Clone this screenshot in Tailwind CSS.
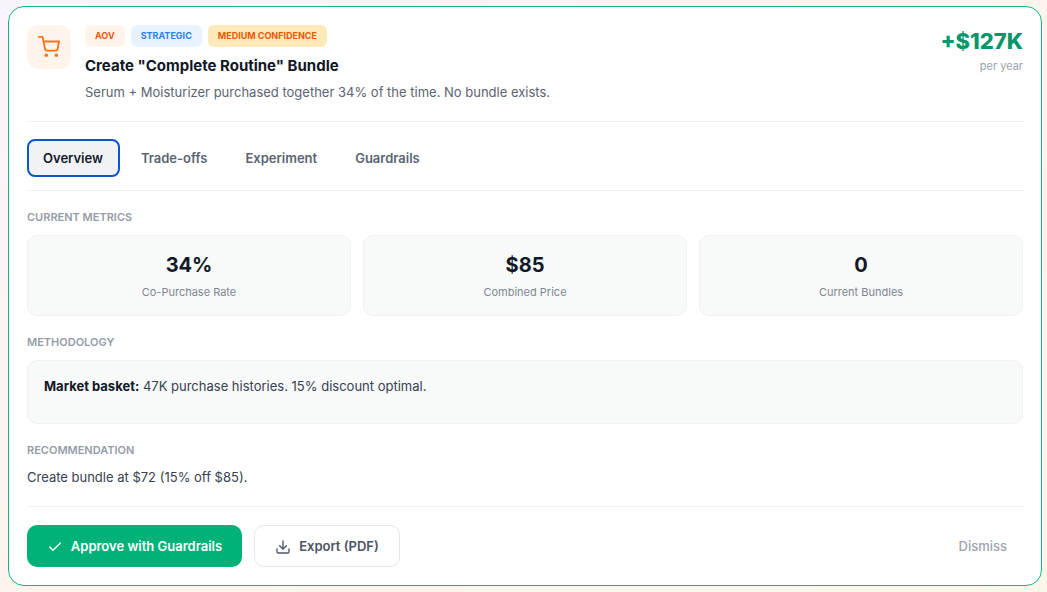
<!DOCTYPE html>
<html>
<head>
<meta charset="utf-8">
<script src="https://cdn.jsdelivr.net/npm/@tailwindcss/browser@4"></script>
</head>
<body class="m-0 h-[592px] w-[1047px] overflow-hidden bg-gradient-to-br from-[#f9f3fb] via-[#fdf4ee] to-[#fbf6ea] font-['Inter',sans-serif]">
<div class="pt-[6px] pl-[8px]">
<div class="flex h-[580px] w-[1034px] flex-col rounded-2xl border border-[#10b981] bg-white px-[18px] pt-[18px]">
  <div class="flex h-[97px] gap-[14px] border-b border-[#f0f1f3]">
    <div class="flex h-[44px] w-[44px] items-center justify-center rounded-[12px] bg-[#fff4eb]">
      <svg class="h-[22px] w-[22px]" viewBox="0 0 24 24" fill="none" stroke="#f97316" stroke-width="2" stroke-linecap="round" stroke-linejoin="round"><circle cx="9" cy="21" r="1" fill="#f97316"/><circle cx="20" cy="21" r="1" fill="#f97316"/><path d="M1 1h4l2.68 13.39a2 2 0 0 0 2 1.61h9.72a2 2 0 0 0 2-1.61L23 6H6"/></svg>
    </div>
    <div class="flex-1">
      <div class="flex gap-[6px]">
        <span class="flex h-[22px] items-center rounded-[6px] bg-[#fff4eb] px-[10px] text-[9px] font-bold text-[#ea580c]">AOV</span>
        <span class="flex h-[22px] items-center rounded-[6px] bg-[#e8f2fe] px-[10px] text-[9px] font-bold text-[#2b7fee]">STRATEGIC</span>
        <span class="flex h-[22px] items-center rounded-[6px] bg-[#feeab9] px-[10px] text-[9px] font-bold text-[#ea580c]">MEDIUM CONFIDENCE</span>
      </div>
      <div class="mt-[8px] text-[15px] leading-[22px] font-bold text-[#111827]">Create "Complete Routine" Bundle</div>
      <div class="mt-[6px] text-[13px] leading-[18px] text-[#5b6472]">Serum + Moisturizer purchased together 34% of the time. No bundle exists.</div>
    </div>
    <div class="text-right">
      <div class="text-[22px] leading-[32px] font-extrabold text-[#059669]">+$127K</div>
      <div class="mt-[2px] text-[11px] leading-[14px] text-[#9ca3af]">per year</div>
    </div>
  </div>
  <div class="flex h-[69px] items-start gap-[4px] border-b border-[#f0f1f3] pt-[17px] text-[13px] font-semibold text-[#5b6472]">
    <span class="flex h-[38px] items-center rounded-[8px] border-2 border-[#0b57c9] bg-[#f1f2f5] pt-[1px] pr-[15px] pl-[14px] text-[#111827]">Overview</span>
    <span class="flex h-[38px] items-center px-[17px] pt-[2px]">Trade-offs</span>
    <span class="flex h-[38px] items-center px-[17px] pt-[2px]">Experiment</span>
    <span class="flex h-[38px] items-center px-[17px] pt-[2px]">Guardrails</span>
  </div>
  <div class="mt-[20px] text-[11px] leading-[12px] font-semibold text-[#959ca8]">CURRENT METRICS</div>
  <div class="mt-[12px] grid grid-cols-3 gap-[12px]">
    <div class="flex h-[81px] flex-col items-center rounded-[10px] border border-[#f0f1f3] bg-[#f8f9f9] pt-[15px]"><div class="text-[20px] leading-[28px] font-bold text-[#111827]">34%</div><div class="mt-[6px] text-[11px] leading-[14px] text-[#7f8692]">Co-Purchase Rate</div></div>
    <div class="flex h-[81px] flex-col items-center rounded-[10px] border border-[#f0f1f3] bg-[#f8f9f9] pt-[15px]"><div class="text-[20px] leading-[28px] font-bold text-[#111827]">$85</div><div class="mt-[6px] text-[11px] leading-[14px] text-[#7f8692]">Combined Price</div></div>
    <div class="flex h-[81px] flex-col items-center rounded-[10px] border border-[#f0f1f3] bg-[#f8f9f9] pt-[15px]"><div class="text-[20px] leading-[28px] font-bold text-[#111827]">0</div><div class="mt-[6px] text-[11px] leading-[14px] text-[#7f8692]">Current Bundles</div></div>
  </div>
  <div class="mt-[20px] text-[11px] leading-[12px] font-semibold text-[#959ca8]">METHODOLOGY</div>
  <div class="mt-[12px] h-[64px] rounded-[10px] border border-[#f0f1f3] bg-[#f8f9f9] px-[16px] pt-[16px] text-[13px] leading-[18px] text-[#374151]"><b class="font-bold text-[#111827]">Market basket:</b> 47K purchase histories. 15% discount optimal.</div>
  <div class="mt-[20px] text-[11px] leading-[12px] font-semibold text-[#959ca8]">RECOMMENDATION</div>
  <div class="mt-[12px] text-[13px] leading-[18px] text-[#374151]">Create bundle at $72 (15% off $85).</div>
  <div class="mt-[20px] flex items-center border-t border-[#f0f1f3] pt-[18px]">
    <span class="flex h-[42px] w-[215px] items-center justify-center gap-[8px] rounded-[10px] bg-[#00b277] pt-[2px] text-[13px] font-semibold text-white">
      <svg class="h-[16px] w-[16px]" viewBox="0 0 24 24" fill="none" stroke="white" stroke-width="2" stroke-linecap="round" stroke-linejoin="round"><path d="M20 6 9 17l-5-5"/></svg>Approve with Guardrails</span>
    <span class="ml-[12px] flex h-[42px] w-[146px] items-center justify-center gap-[8px] rounded-[10px] border border-[#e5e7eb] bg-white pt-[2px] text-[13px] font-semibold text-[#4b5563]">
      <svg class="h-[16px] w-[16px]" viewBox="0 0 24 24" fill="none" stroke="#4b5563" stroke-width="2" stroke-linecap="round" stroke-linejoin="round"><path d="M21 15v4a2 2 0 0 1-2 2H5a2 2 0 0 1-2-2v-4"/><path d="M7 10l5 5 5-5"/><path d="M12 15V3"/></svg>Export (PDF)</span>
    <span class="ml-auto pt-[2px] pr-[16px] text-[13px] font-medium text-[#9ca3af]">Dismiss</span>
  </div>
</div>
</div>
</body>
</html>
